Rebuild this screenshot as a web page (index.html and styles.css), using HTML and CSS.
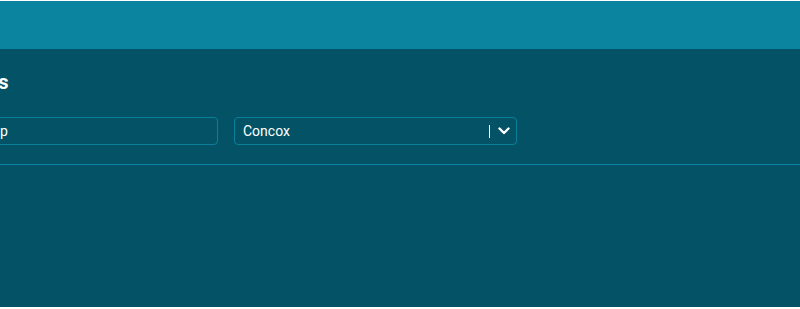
FILE: index.html
```html
<!DOCTYPE html>
<html lang="en">
<head>
    <meta charset="UTF-8">
    <meta name="viewport" content="width=device-width, initial-scale=1.0">
    <title>Devices</title>
    <link rel="stylesheet" href="styles.css">
</head>
<body>

<header class="topbar"></header>

<main class="panel">
    <div class="content">
        <h2 class="title">Devices</h2>
        <form class="filters">
            <input class="field" type="text" value="Workshop">
            <div class="select">
                <span class="select-value">Concox</span>
                <span class="select-sep"></span>
                <svg class="select-arrow" width="12" height="8" viewBox="0 0 12 8">
                    <polyline points="1.5,1.5 6,6 10.5,1.5" fill="none" stroke="#fff" stroke-width="2.4" stroke-linecap="round" stroke-linejoin="round"/>
                </svg>
            </div>
        </form>
    </div>
    <div class="divider"></div>
</main>

</body>
</html>
```

FILE: styles.css
```css
body {
    font-family: Roboto, "Liberation Sans", sans-serif;
    background-color: #fff;
    margin: 0;
    padding-top: 1px;
    overflow: hidden;
}

.topbar {
    height: 48px;
    background-color: #0b84a0;
}

.panel {
    height: 258px;
    background-color: #045265;
    padding-top: 21px;
    box-sizing: border-box;
    color: #fff;
}

.content {
    margin-left: -62px;
}

.title {
    margin: 0;
    font-size: 20px;
    line-height: 24px;
    font-weight: 700;
}

.filters {
    display: flex;
    gap: 16px;
    margin-top: 23px;
}

.field {
    width: 280px;
    height: 28px;
    box-sizing: border-box;
    padding: 0 8px 0 6px;
    border: 1px solid #0b7f9a;
    border-radius: 4px;
    background: transparent;
    color: #fff;
    font-family: inherit;
    font-size: 14px;
    outline: none;
}

.select {
    width: 283px;
    height: 28px;
    box-sizing: border-box;
    display: flex;
    align-items: center;
    padding-left: 8px;
    border: 1px solid #0b7f9a;
    border-radius: 4px;
    font-size: 14px;
}

.select-value {
    flex: 1;
}

.select-sep {
    width: 1px;
    height: 13px;
    background-color: #fff;
}

.select-arrow {
    margin: 0 6px 0 8px;
}

.divider {
    height: 1px;
    margin-top: 19px;
    background-color: #0b84a0;
}
```
